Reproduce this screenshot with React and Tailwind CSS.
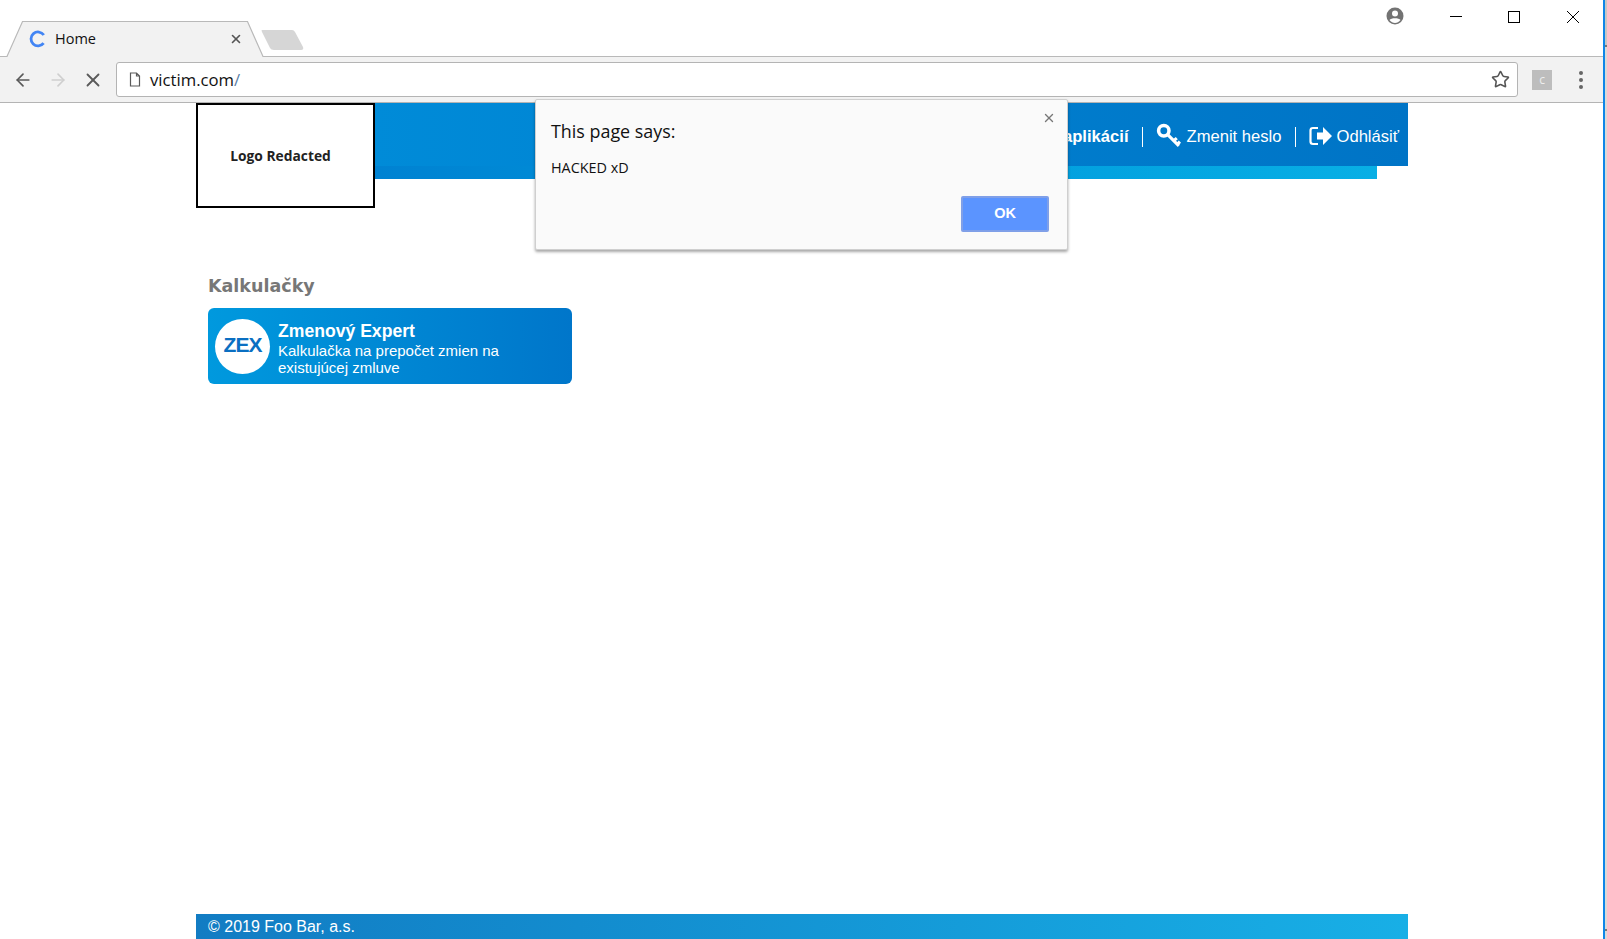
import React from 'react';
import { ArrowLeft, ArrowRight, X, Star } from 'lucide-react';

const sans = "font-['Liberation_Sans',Arial,sans-serif]";
const ui = "font-['Open_Sans','Noto_Sans',sans-serif]";

function TabStrip() {
  return (
    <div className="relative h-[56px] bg-white">
      {/* tab shape */}
      <svg className="absolute left-0 top-[20px] z-10" width="320" height="38" viewBox="0 0 320 38">
        <path d="M0 36.5 H7 L22.5 1.5 H247.5 L263 36.5 V38 H0 Z" fill="#f2f2f2" />
        <path d="M0 36.5 H7 L22.5 1.5 H247.5 L263 36.5 H266" fill="none" stroke="#b9b9b9" strokeWidth="1.2" />
        <path d="M262 10 H292 Q294 10 295 12 L303 27 Q304 30 301 30 H274 Q271 30 270 28 L262 12 Q261 10 262 10 Z" fill="#d6d6d6" />
      </svg>
      <svg className="absolute left-[29px] top-[30px] z-10" width="18" height="18" viewBox="0 0 18 18" fill="none">
        <path d="M14.8 5 A7 7 0 1 0 14.6 13.2" stroke="#4285f4" strokeWidth="2.8" />
      </svg>
      <span className={`absolute left-[55px] top-[29px] z-10 text-[14.5px] leading-5 text-[#111] ${ui}`}>Home</span>
      <X className="absolute left-[229px] top-[32px] z-10 text-[#555]" size={14} strokeWidth={2.8} />
      {/* window controls */}
      <svg className="absolute left-[1386px] top-[7px]" width="18" height="18" viewBox="0 0 18 18">
        <circle cx="9" cy="9" r="8.5" fill="#737373" />
        <circle cx="9" cy="6.6" r="3" fill="#fff" />
        <path d="M3.5 13 C5 10.6 13 10.6 14.5 13 C13 15 11 16 9 16 C7 16 5 15 3.5 13 Z" fill="#fff" />
      </svg>
      <div className="absolute left-[1450px] top-[16px] h-px w-[12px] bg-black" />
      <div className="absolute left-[1508px] top-[11px] h-[12px] w-[12px] border border-black" />
      <svg className="absolute left-[1566px] top-[10px]" width="14" height="14" viewBox="0 0 14 14" stroke="#000" strokeWidth="1">
        <path d="M1 1 L13 13 M13 1 L1 13" />
      </svg>
    </div>
  );
}

function Toolbar() {
  return (
    <div className="flex h-[47px] items-center border-y border-t-[#b9b9b9] border-b-[#b4b4b4] bg-[#f2f2f2]">
      <div className="ml-[13px] flex w-[103px] items-center gap-[15px]">
        <ArrowLeft className="text-[#5a5a5a]" size={20} strokeWidth={2} />
        <ArrowRight className="text-[#cfcfcf]" size={20} strokeWidth={2} />
        <X className="-ml-px text-[#5a5a5a]" size={22} strokeWidth={2} />
      </div>
      <div className="flex h-[35px] w-[1402px] items-center rounded-[3px] border border-[#b4b4b4] bg-white">
        <svg className="ml-[12px]" width="12" height="15" viewBox="0 0 12 15" fill="none" stroke="#5a5a5a" strokeWidth="1.2">
          <path d="M1.5 1 H7.5 L10.5 4 V14 H1.5 Z M7.5 1 V4 H10.5" />
        </svg>
        <span className={`ml-[9px] pt-[1px] text-[16.7px] text-[#111] ${ui}`}>victim.com<span className="text-[#5b7fa8]">/</span></span>
        <Star className="ml-auto mr-[7px] text-[#555]" size={19} strokeWidth={2} />
      </div>
      <div className={`ml-[14px] flex h-[20px] w-[20px] items-center justify-center bg-[#bdbdbd] text-[12px] text-[#eee] ${ui}`}>c</div>
      <div className="ml-[27px] flex flex-col gap-[3px]">
        <span className="h-[4px] w-[4px] rounded-full bg-[#666]" />
        <span className="h-[4px] w-[4px] rounded-full bg-[#666]" />
        <span className="h-[4px] w-[4px] rounded-full bg-[#666]" />
      </div>
    </div>
  );
}

function Header() {
  return (
    <div className="relative flex h-[105px] items-start">
      <div className="z-10 flex h-[105px] w-[179px] shrink-0 items-center justify-center border-2 border-black bg-white">
        <span className="mr-[10px] mt-[1px] font-['Open_Sans',sans-serif] text-[13.8px] font-bold text-[#222]">Logo Redacted</span>
      </div>
      <div className="flex-1">
        <div className={`flex h-[63px] items-center justify-end bg-gradient-to-r from-[#008bd8] to-[#0074c6] pr-[9px] pt-[5px] text-[16.6px] text-white ${sans}`}>
          <span className="font-bold">aplikácií</span>
          <span className="mx-[13px] h-[20px] w-px bg-white" />
          <svg className="mb-[3px] mr-[5px]" width="26" height="26" viewBox="0 0 25 25" fill="none" stroke="#fff">
            <circle cx="7.5" cy="7.5" r="5" strokeWidth="3.4" />
            <path d="M11 11 L22 22 M17 17 L20 14.5 M20.5 20.5 L23 18" strokeWidth="3" />
          </svg>
          <span>Zmenit heslo</span>
          <span className="mx-[13px] h-[20px] w-px bg-white" />
          <svg className="mb-[3px] mr-[4px]" width="24" height="20" viewBox="0 0 24 20">
            <path d="M9 2 H4 Q1.5 2 1.5 4.5 V15.5 Q1.5 18 4 18 H9" fill="none" stroke="#fff" strokeWidth="2.2" />
            <path d="M8 6.5 H14 V1 L23 10 L14 19 V13.5 H8 Z" fill="#fff" />
          </svg>
          <span>Odhlásiť</span>
        </div>
        <div className="mr-[31px] h-[13px] bg-gradient-to-r from-[#0082d2] to-[#08afe5]" />
      </div>
    </div>
  );
}

function Calculators() {
  return (
    <div className="flex-1 pl-[12px] pt-[66px]">
      <h2 className="font-['DejaVu_Sans',sans-serif] text-[17.5px] font-bold leading-[24px] text-[#777]">Kalkulačky</h2>
      <div className={`mt-[10px] flex h-[76px] w-[364px] items-center rounded-[6px] bg-gradient-to-r from-[#0099de] to-[#0076ca] pl-[7px] text-white ${sans}`}>
        <div className="flex h-[55px] w-[55px] shrink-0 items-center justify-center rounded-full bg-white pb-[2px] text-[21px] font-bold tracking-[-1px] text-[#0a6fc2]">ZEX</div>
        <div className="ml-[8px] w-[270px] pt-[4px]">
          <div className="text-[17.6px] font-bold leading-[21px]">Zmenový Expert</div>
          <div className="text-[15px] leading-[17px]">Kalkulačka na prepočet zmien na existujúcej zmluve</div>
        </div>
      </div>
    </div>
  );
}

function AlertDialog() {
  return (
    <div className={`absolute left-[535px] top-[99px] z-20 h-[151px] w-[533px] rounded-[2px] border border-[#cfcfcf] bg-[#fafafa] shadow-[0_2px_3px_rgba(0,0,0,0.35)] ${ui}`}>
      <X className="absolute right-[11px] top-[11px] text-[#777]" size={14} strokeWidth={2.4} />
      <div className="absolute left-[15px] top-[19px] text-[17.9px] leading-6 text-[#111]">This page says:</div>
      <div className="absolute left-[15px] top-[58px] text-[14.4px] leading-5 text-[#111]">HACKED xD</div>
      <button className={`absolute left-[425px] top-[96px] h-[36px] w-[88px] rounded-[2px] border-2 border-[#7f9fe8] bg-[#5b94ff] text-[14.5px] font-bold text-white ${sans}`}>OK</button>
    </div>
  );
}

export default function App() {
  return (
    <div className="relative flex h-[939px] w-full overflow-hidden bg-white">
      <div className="flex w-[1603px] shrink-0 flex-col">
        <TabStrip />
        <Toolbar />
        <div className="flex flex-1 flex-col pl-[196px] pr-[195px]">
          <Header />
          <Calculators />
          <div className={`flex h-[25px] items-center bg-gradient-to-r from-[#127cc3] to-[#18afe6] pl-[12px] pt-[1px] text-[16px] text-white ${sans}`}>
            © 2019 Foo Bar, a.s.
          </div>
        </div>
      </div>
      {/* window edge with the scrollbar behind it */}
      <div className="flex w-[4px] flex-col border-l-2 border-[#0f86e8]">
        <div className="h-[45px] bg-[#c6c6c6]" />
        <div className="h-[2px] bg-[#777]" />
        <div className="flex-1 bg-[#d9d9d9]" />
        <div className="h-[2px] bg-[#777]" />
        <div className="h-[8px] bg-[#d9d9d9]" />
      </div>
      <AlertDialog />
    </div>
  );
}
